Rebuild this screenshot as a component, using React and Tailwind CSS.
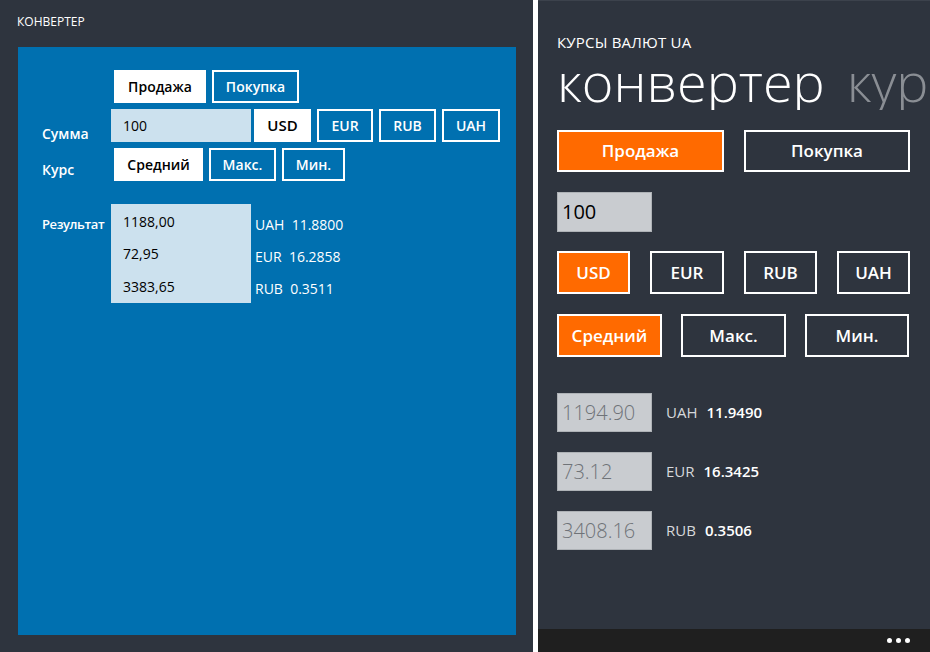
import React from "react";

const font = { fontFamily: '"Open Sans", "Noto Sans", sans-serif' };

function Btn({ active, className = "", children }) {
  return (
    <div
      className={
        "flex items-center justify-center border-2 border-white text-[14px] font-semibold " +
        (active ? "bg-white text-black" : "text-white") +
        " " +
        className
      }
    >
      {children}
    </div>
  );
}

function PhoneBtn({ active, className = "", children }) {
  return (
    <div
      className={
        "flex items-center justify-center border-2 border-white text-[17px] font-semibold text-white " +
        (active ? "bg-[#ff6a00]" : "") +
        " " +
        className
      }
    >
      {children}
    </div>
  );
}

function DesktopPanel() {
  const results = [
    ["1188,00", "UAH", "11.8800"],
    ["72,95", "EUR", "16.2858"],
    ["3383,65", "RUB", "0.3511"],
  ];
  return (
    <div className="w-[533px] h-full flex flex-col bg-[#2e343e]">
      <div className="h-[47px] pl-[17px] pt-[13px] text-[12px] text-white">КОНВЕРТЕР</div>
      <div className="flex-1 ml-[18px] mr-[17px] mb-[17px] bg-[#0070b0] pt-[23px] pl-[24px]">
        <div className="flex h-[33px] pl-[72px] gap-[6px]">
          <Btn active className="w-[92px]">Продажа</Btn>
          <Btn className="w-[87px]">Покупка</Btn>
        </div>
        <div className="flex items-end h-[33px] mt-[6px]">
          <div className="w-[69px] text-[14px] font-semibold text-white leading-none pb-[1px]">Сумма</div>
          <div className="w-[140px] h-[33px] bg-[#cce1ee] flex items-center pl-[12px] text-[14px] text-black">100</div>
          <Btn active className="w-[57px] h-[33px] ml-[3px] text-[15px]">USD</Btn>
          <Btn className="w-[56px] h-[33px] ml-[6px]">EUR</Btn>
          <Btn className="w-[57px] h-[33px] ml-[6px]">RUB</Btn>
          <Btn className="w-[58px] h-[33px] ml-[6px]">UAH</Btn>
        </div>
        <div className="flex items-end h-[33px] mt-[6px]">
          <div className="w-[69px] text-[14px] font-semibold text-white leading-none pb-[4px]">Курс</div>
          <Btn active className="w-[89px] h-[33px] ml-[3px]">Средний</Btn>
          <Btn className="w-[67px] h-[33px] ml-[6px]">Макс.</Btn>
          <Btn className="w-[63px] h-[33px] ml-[6px]">Мин.</Btn>
        </div>
        <div className="flex mt-[23px]">
          <div className="w-[69px] pt-[11px] text-[13px] font-semibold tracking-[-0.4px] text-white">Результат</div>
          <div className="w-[140px] h-[99px] bg-[#cce1ee] pl-[12px] pt-[1px] text-[14px] text-black">
            {results.map((r) => (
              <div key={r[1]} className="h-[32.5px] flex items-center">{r[0]}</div>
            ))}
          </div>
          <div className="pl-[4px] pt-[4px] text-[14px] text-white">
            {results.map((r) => (
              <div key={r[1]} className="h-[32px] flex items-center whitespace-pre">
                {r[1] + "  " + r[2]}
              </div>
            ))}
          </div>
        </div>
      </div>
    </div>
  );
}

function PhonePanel() {
  const results = [
    ["1194.90", "UAH", "11.9490"],
    ["73.12", "EUR", "16.3425"],
    ["3408.16", "RUB", "0.3506"],
  ];
  return (
    <div className="flex-1 h-full flex flex-col bg-[#2e343e] overflow-hidden border-t border-[#3c424c]">
      <div className="flex-1 pl-[19px]">
        <div className="mt-[31px] text-[15px] text-white leading-[20px] tracking-[0.2px]">КУРСЫ ВАЛЮТ UA</div>
        <div className="flex whitespace-nowrap overflow-hidden text-[54px] font-light leading-[58px]">
          <span className="text-white">конвертер</span>
          <span className="ml-[22px] text-[#8a8e94]">кур</span>
        </div>
        <div className="flex mt-[20px] gap-[20px] h-[42px]">
          <PhoneBtn active className="w-[167px]">Продажа</PhoneBtn>
          <PhoneBtn className="w-[166px]">Покупка</PhoneBtn>
        </div>
        <div className="mt-[20px] w-[95px] h-[40px] bg-[#c9ccd0] border border-[#aeb2b6] flex items-center pl-[4px] text-[20px] text-black">
          100
        </div>
        <div className="flex mt-[19px] h-[43px] gap-[20px]">
          <PhoneBtn active className="w-[73px]">USD</PhoneBtn>
          <PhoneBtn className="w-[74px]">EUR</PhoneBtn>
          <PhoneBtn className="w-[73px]">RUB</PhoneBtn>
          <PhoneBtn className="w-[73px]">UAH</PhoneBtn>
        </div>
        <div className="flex mt-[20px] h-[43px] gap-[19px]">
          <PhoneBtn active className="w-[105px]">Средний</PhoneBtn>
          <PhoneBtn className="w-[105px]">Макс.</PhoneBtn>
          <PhoneBtn className="w-[104px]">Мин.</PhoneBtn>
        </div>
        <div className="mt-[36px] flex flex-col gap-[20px]">
          {results.map((r) => (
            <div key={r[1]} className="flex items-center h-[39px]">
              <div className="w-[95px] h-[39px] bg-[#c9ccd0] border border-[#aeb2b6] flex items-center pl-[4px] text-[20px] font-light text-[#6f7378]">
                {r[0]}
              </div>
              <span className="ml-[14px] text-[15px] text-[#d6d8db]">{r[1]}</span>
              <span className="ml-[9px] text-[15px] font-semibold text-white">{r[2]}</span>
            </div>
          ))}
        </div>
      </div>
      <div className="h-[23px] bg-[#1f1f1f] flex items-center justify-end pr-[20px] gap-[4px]">
        <span className="w-[5px] h-[5px] rounded-full bg-white" />
        <span className="w-[5px] h-[5px] rounded-full bg-white" />
        <span className="w-[5px] h-[5px] rounded-full bg-white" />
      </div>
    </div>
  );
}

export default function App() {
  return (
    <div className="w-[930px] h-[652px] flex overflow-hidden" style={font}>
      <DesktopPanel />
      <div className="w-[5px] h-full bg-white" />
      <PhonePanel />
    </div>
  );
}
